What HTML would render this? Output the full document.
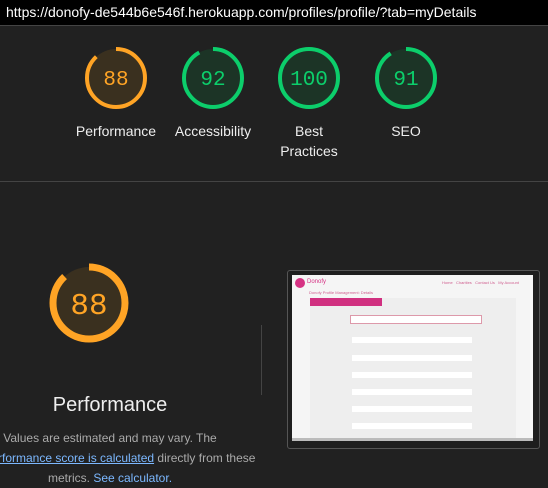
<!DOCTYPE html><html><head><style>
body{margin:0;width:548px;height:483px;background:#212121;overflow:hidden;font-family:"Liberation Sans",Arial,sans-serif;position:relative}
.top{position:absolute;left:0;top:0;width:548px;height:26px;background:#000;border-bottom:1px solid #444;color:#fff;font-size:14px;line-height:24px;padding-left:6px;box-sizing:border-box}
.g{position:absolute;text-align:center;color:#eee;font-size:14px;width:100px;line-height:20px}
.a{position:absolute}
</style></head><body>
<div class="top">https://donofy-de544b6e546f.herokuapp.com/profiles/profile/?tab=myDetails</div>
<svg class="a" style="left:0;top:0" width="548" height="483">
<g stroke-width="4" fill="none">
<circle cx="116" cy="78" r="29" fill="#3a301f" stroke="none"/>
<circle cx="116" cy="78" r="29" stroke="#ffa425" stroke-dasharray="160.3 22" transform="rotate(-90 116 78)"/>
<circle cx="213" cy="78" r="29" fill="#1c3426" stroke="none"/>
<circle cx="213" cy="78" r="29" stroke="#0cce6b" stroke-dasharray="167.6 22" transform="rotate(-90 213 78)"/>
<circle cx="309" cy="78" r="29" fill="#1c3426" stroke="none"/>
<circle cx="309" cy="78" r="29" stroke="#0cce6b"/>
<circle cx="406" cy="78" r="29" fill="#1c3426" stroke="none"/>
<circle cx="406" cy="78" r="29" stroke="#0cce6b" stroke-dasharray="165.8 22" transform="rotate(-90 406 78)"/>
<circle cx="89" cy="303" r="36" fill="#3a301f" stroke="none" />
<circle cx="89" cy="303" r="36" stroke="#ffa425" stroke-width="7" stroke-dasharray="199 30" transform="rotate(-90 89 303)"/>
</g>
<g font-family="Liberation Mono,monospace" text-anchor="middle" font-size="21">
<text x="116" y="85" fill="#ffa425">88</text>
<text x="213" y="85" fill="#0cce6b">92</text>
<text x="309" y="85" fill="#0cce6b">100</text>
<text x="406" y="85" fill="#0cce6b">91</text>
<text x="89" y="314" font-size="31" fill="#ffa425">88</text>
</g>
<line x1="0" y1="181.5" x2="548" y2="181.5" stroke="#444"/>
<line x1="261.5" y1="325" x2="261.5" y2="395" stroke="#444"/>
</svg>
<div class="g" style="left:66px;top:121px">Performance</div>
<div class="g" style="left:163px;top:121px">Accessibility</div>
<div class="g" style="left:259px;top:121px">Best<br>Practices</div>
<div class="g" style="left:356px;top:121px">SEO</div>
<div class="a" style="left:0;top:394px;width:220px;text-align:center;color:#eee;font-size:20px">Performance</div>
<div class="a" style="left:0;top:428px;width:220px;text-align:center;color:#aaa;font-size:12px;line-height:20px">Values are estimated and may vary. The</div>
<div class="a" style="left:-2px;top:448px;width:260px;color:#aaa;font-size:12px;line-height:20px;white-space:nowrap"><span style="color:#7cb8ff;text-decoration:underline">rformance score is calculated</span> directly from these</div>
<div class="a" style="left:0;top:468px;width:220px;text-align:center;color:#aaa;font-size:12px;line-height:20px">metrics. <span style="color:#7cb8ff">See calculator.</span></div>
<div class="a" style="left:287px;top:270px;width:251px;height:177px;border:1px solid #555;border-radius:3px;background:#1e1e1e">
<div class="a" style="left:4px;top:4px;width:241px;height:166px;background:#f5f5f5;overflow:hidden">
<div class="a" style="left:3px;top:3px;width:10px;height:10px;border-radius:50%;background:#d63384"></div>
<div class="a" style="left:15px;top:4px;font-size:6px;color:#d63384">Donofy</div>
<div class="a" style="left:150px;top:5px;font-size:4px;color:#d06090">Home &nbsp; Charities &nbsp; Contact Us &nbsp; My Account</div>
<div class="a" style="left:17px;top:15px;font-size:4px;color:#d06090">Donofy Profile Management: Details</div>
<div class="a" style="left:18px;top:23px;width:206px;height:8px;background:#eee"></div>
<div class="a" style="left:18px;top:23px;width:72px;height:8px;background:#d03080"></div>
<div class="a" style="left:18px;top:31px;width:206px;height:140px;background:#eee"></div>
<div class="a" style="left:58px;top:40px;width:130px;height:7px;background:#fff;border:1px solid #d9a"></div>
<div class="a" style="left:60px;top:62px;width:120px;height:6px;background:#fff"></div>
<div class="a" style="left:60px;top:80px;width:120px;height:6px;background:#fff"></div>
<div class="a" style="left:60px;top:97px;width:120px;height:6px;background:#fff"></div>
<div class="a" style="left:60px;top:114px;width:120px;height:6px;background:#fff"></div>
<div class="a" style="left:60px;top:131px;width:120px;height:6px;background:#fff"></div>
<div class="a" style="left:60px;top:148px;width:120px;height:6px;background:#fff"></div>
<div class="a" style="left:0;top:163px;width:241px;height:3px;background:#bbb"></div>
</div></div>
</body></html>
